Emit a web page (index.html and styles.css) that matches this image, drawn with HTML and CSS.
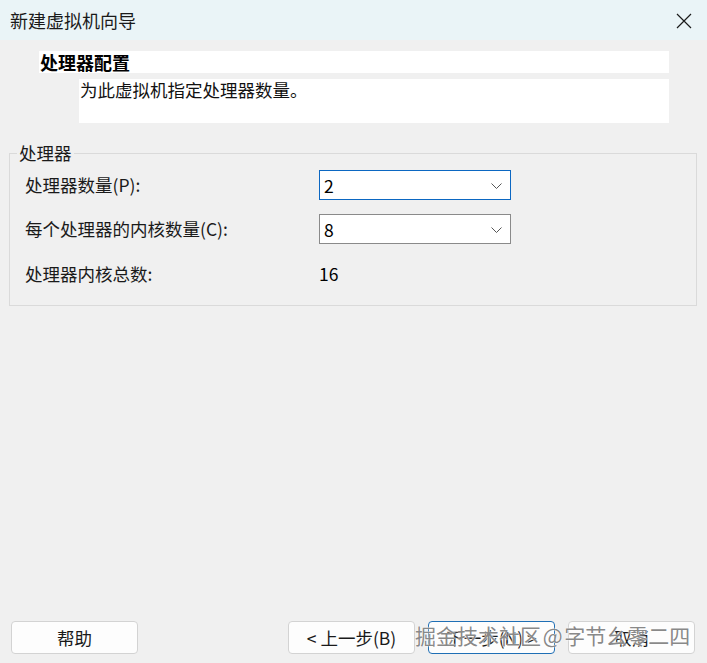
FILE: index.html
```html
<!DOCTYPE html>
<html lang="zh-CN">
<head>
<meta charset="utf-8">
<title>新建虚拟机向导</title>
<link rel="stylesheet" href="styles.css">
</head>
<body>
<div class="window">
  <div class="titlebar">
    <span class="title">新建虚拟机向导</span>
    <svg class="close" width="16" height="16" viewBox="0 0 16 16"><path d="M1 1L15 15M15 1L1 15" stroke="#1b1b1b" stroke-width="1.2" fill="none"/></svg>
  </div>
  <div class="content">
    <div class="head">处理器配置</div>
    <div class="desc">为此虚拟机指定处理器数量。</div>
    <fieldset class="group">
      <legend>处理器</legend>
      <div class="grid">
        <div class="label">处理器数量(P):</div>
        <div class="combo focus"><span>2</span><svg width="11" height="6" viewBox="0 0 11 6"><path d="M0.5 0.5L5.5 5.5L10.5 0.5" stroke="#555" stroke-width="1" fill="none"/></svg></div>
        <div class="label">每个处理器的内核数量(C):</div>
        <div class="combo"><span>8</span><svg width="11" height="6" viewBox="0 0 11 6"><path d="M0.5 0.5L5.5 5.5L10.5 0.5" stroke="#555" stroke-width="1" fill="none"/></svg></div>
        <div class="label">处理器内核总数:</div>
        <div class="value">16</div>
      </div>
    </fieldset>
  </div>
  <div class="footer">
    <button class="btn">帮助</button>
    <div class="spacer"></div>
    <div class="btns">
      <button class="btn">&lt; 上一步(B)</button>
      <button class="btn primary">下一步(N) &gt;</button>
      <button class="btn">取消</button>
    </div>
  </div>
  <div class="watermark">掘金技术社区 @ 字节幺零二四</div>
</div>
</body>
</html>
```
FILE: styles.css
```css
* { box-sizing: border-box; }
html, body { margin: 0; padding: 0; }
body {
  width: 707px;
  height: 663px;
  overflow: hidden;
  background: #f0f0f0;
  font-family: "Noto Sans CJK SC", "Noto Sans", sans-serif;
  color: #1a1a1a;
}
.window {
  position: relative;
  width: 707px;
  height: 663px;
  display: flex;
  flex-direction: column;
}
.titlebar {
  height: 40px;
  flex: none;
  background: #eaf4f7;
  display: flex;
  align-items: center;
  justify-content: space-between;
  padding: 0 15px 0 10px;
}
.title { font-size: 18px; line-height: 22px; color: #1a1a1a; }
.close { display: block; margin-top: 1px; }
.content { flex: 1; display: flex; flex-direction: column; }
.head {
  margin: 11px 0 0 39px;
  width: 630px;
  height: 22px;
  background: #fff;
  font-size: 18px;
  line-height: 22px;
  font-weight: 700;
  padding-left: 1px;
  color: #000;
}
.desc {
  margin: 6px 0 0 79px;
  width: 590px;
  height: 44px;
  background: #fff;
  font-size: 17.5px;
  line-height: 22px;
  padding-left: 1px;
  color: #111;
}
.group {
  margin: 20px 0 0 9px;
  width: 688px;
  border: 1px solid #dadada;
  padding: 7px 0 15px 15px;
  min-inline-size: 0;
}
.group legend {
  font-size: 17.5px;
  line-height: 20px;
  padding: 0 2px;
  margin-left: -8px;
  color: #1a1a1a;
}
.grid {
  display: grid;
  grid-template-columns: 294px 192px;
  grid-template-rows: 30px 30px 32px;
  row-gap: 14px;
  align-items: center;
}
.label { font-size: 17.5px; line-height: 22px; color: #1a1a1a; }
.value { font-size: 17.5px; line-height: 22px; color: #000; padding-left: 0; }
.combo {
  height: 30px;
  background: #fff;
  border: 1px solid #8a8a8a;
  display: flex;
  align-items: center;
  justify-content: space-between;
  padding: 0 8px 0 4px;
  font-size: 17.5px;
  color: #000;
}
.combo.focus { border-color: #0b67c2; }
.combo svg { display: block; margin-top: 1px; }
.footer {
  flex: none;
  display: flex;
  align-items: center;
  padding: 0 12px 9px 11px;
}
.spacer { flex: 1; }
.btns { display: flex; gap: 13px; }
.btn {
  width: 127px;
  height: 33px;
  background: #fdfdfd;
  border: 1px solid #d3d3d3;
  border-radius: 4px;
  font-family: "Noto Sans CJK SC", "Noto Sans", sans-serif;
  font-size: 17.5px;
  line-height: 22px;
  color: #1a1a1a;
  padding: 0;
}
.btn.primary { border-color: #1f6fb5; }
.watermark {
  position: absolute;
  left: 415px;
  top: 621px;
  font-size: 21px;
  line-height: 28px;
  white-space: nowrap;
  word-spacing: -3px;
  color: rgba(105, 105, 105, 0.8);
  text-shadow: 0 0 2px #fff, 0 0 1px #fff;
}
```
